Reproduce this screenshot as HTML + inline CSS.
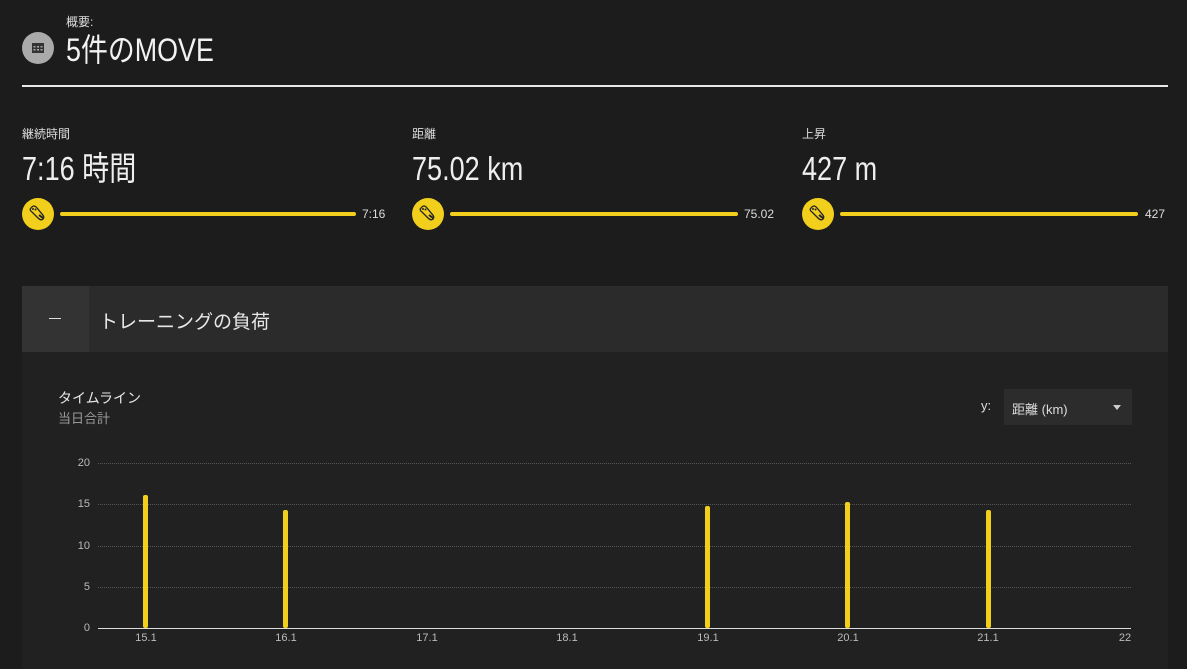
<!DOCTYPE html>
<html><head><meta charset="utf-8"><style>
*{margin:0;padding:0;box-sizing:border-box}
body{width:1187px;height:669px;background:#1c1c1c;color:#eee;font-family:"Liberation Sans","Noto Sans CJK JP",sans-serif;position:relative;overflow:hidden}
.a{position:absolute}
.lbl{font-size:12px;color:#ddd}
.big{font-size:33px;line-height:1;color:#eee;transform:scaleX(0.82);transform-origin:0 0;white-space:nowrap}
.bar{height:4px;background:#f2cf1d;border-radius:2px}
.val{font-size:12px;color:#ddd}
.yl{font-size:11px;color:#bbb;width:30px;text-align:right}
.xl{font-size:11px;color:#bbb;width:40px;text-align:center}
.grid{height:0;border-top:1px dotted #555;left:98px;width:1033px}
.vb{width:5px;background:#f2cf1d;border-radius:2px}
</style></head><body>
<div class="a lbl" style="left:66px;top:13px;font-size:12px">概要:</div>
<div class="a" style="left:22px;top:32px;width:32px;height:32px;border-radius:50%;background:#aaa">
<svg width="32" height="32"><rect x="10" y="11" width="12" height="10" fill="#333"/><g fill="#aaa"><rect x="11.5" y="14" width="2" height="1.5"/><rect x="15" y="14" width="2" height="1.5"/><rect x="18.5" y="14" width="2" height="1.5"/><rect x="11.5" y="17" width="2" height="1.5"/><rect x="15" y="17" width="2" height="1.5"/><rect x="18.5" y="17" width="2" height="1.5"/></g></svg></div>
<div class="a big" style="left:66px;top:34px;font-size:32px;color:#f2f2f2;transform:scaleX(0.84)">5件のMOVE</div>
<div class="a" style="left:22px;top:85px;width:1146px;height:2px;background:#e8e8e8"></div>

<div class="a lbl" style="left:22px;top:125px">継続時間</div>
<div class="a big" style="left:22px;top:152px">7:16 時間</div>
<div class="a lbl" style="left:412px;top:125px">距離</div>
<div class="a big" style="left:412px;top:152px">75.02 km</div>
<div class="a lbl" style="left:802px;top:125px">上昇</div>
<div class="a big" style="left:802px;top:152px">427 m</div>

<svg width="0" height="0" style="position:absolute"><defs><g id="shoe"><circle cx="16" cy="16" r="16" fill="#f2cf1d"/><path d="M9 10 q3-4 6 0 l5 6 q3 3 1 5 q-2 2-5-1 l-6-6 q-3-2-1-4z" fill="none" stroke="#222" stroke-width="1.3"/><circle cx="11" cy="11" r="1" fill="#222"/><circle cx="13.5" cy="11.5" r="1" fill="#222"/><path d="M17 17 l4 3" stroke="#222" stroke-width="2"/></g></defs></svg>
<svg class="a" style="left:22px;top:198px" width="32" height="32"><use href="#shoe"/></svg>
<div class="a bar" style="left:60px;top:212px;width:296px"></div>
<div class="a val" style="left:362px;top:207px">7:16</div>
<svg class="a" style="left:412px;top:198px" width="32" height="32"><use href="#shoe"/></svg>
<div class="a bar" style="left:450px;top:212px;width:288px"></div>
<div class="a val" style="left:744px;top:207px">75.02</div>
<svg class="a" style="left:802px;top:198px" width="32" height="32"><use href="#shoe"/></svg>
<div class="a bar" style="left:840px;top:212px;width:298px"></div>
<div class="a val" style="left:1145px;top:207px">427</div>

<div class="a" style="left:22px;top:286px;width:1146px;height:66px;background:#2b2b2b"></div>
<div class="a" style="left:22px;top:286px;width:67px;height:66px;background:#333"></div>
<div class="a" style="left:49px;top:318px;width:12px;height:1px;background:#ddd"></div>
<div class="a" style="left:99px;top:307px;font-size:19px;color:#e8e8e8">トレーニングの負荷</div>
<div class="a" style="left:22px;top:352px;width:1146px;height:317px;background:#212121"></div>

<div class="a" style="left:58px;top:388px;font-size:14px;color:#e8e8e8">タイムライン</div>
<div class="a" style="left:58px;top:408px;font-size:13px;color:#999">当日合計</div>
<div class="a" style="left:981px;top:398px;font-size:13px;color:#ddd">y:</div>
<div class="a" style="left:1004px;top:389px;width:128px;height:36px;background:#2c2c2c"></div>
<div class="a" style="left:1012px;top:399px;font-size:13px;color:#ddd">距離 (km)</div>
<div class="a" style="left:1113px;top:405px;width:0;height:0;border-left:4px solid transparent;border-right:4px solid transparent;border-top:5px solid #ccc"></div>

<div class="a grid" style="top:463px"></div>
<div class="a grid" style="top:504px"></div>
<div class="a grid" style="top:546px"></div>
<div class="a grid" style="top:587px"></div>
<div class="a" style="left:98px;top:628px;width:1033px;height:1px;background:#ddd"></div>
<div class="a yl" style="left:60px;top:457px">20</div>
<div class="a yl" style="left:60px;top:498px">15</div>
<div class="a yl" style="left:60px;top:540px">10</div>
<div class="a yl" style="left:60px;top:581px">5</div>
<div class="a yl" style="left:60px;top:622px">0</div>

<div class="a vb" style="left:143px;top:495px;height:133px"></div>
<div class="a vb" style="left:283px;top:510px;height:118px"></div>
<div class="a vb" style="left:705px;top:506px;height:122px"></div>
<div class="a vb" style="left:845px;top:502px;height:126px"></div>
<div class="a vb" style="left:986px;top:510px;height:118px"></div>

<div class="a xl" style="left:126px;top:632px">15.1</div>
<div class="a xl" style="left:266px;top:632px">16.1</div>
<div class="a xl" style="left:407px;top:632px">17.1</div>
<div class="a xl" style="left:547px;top:632px">18.1</div>
<div class="a xl" style="left:688px;top:632px">19.1</div>
<div class="a xl" style="left:828px;top:632px">20.1</div>
<div class="a xl" style="left:968px;top:632px">21.1</div>
<div class="a xl" style="left:1105px;top:632px">22</div>
</body></html>
